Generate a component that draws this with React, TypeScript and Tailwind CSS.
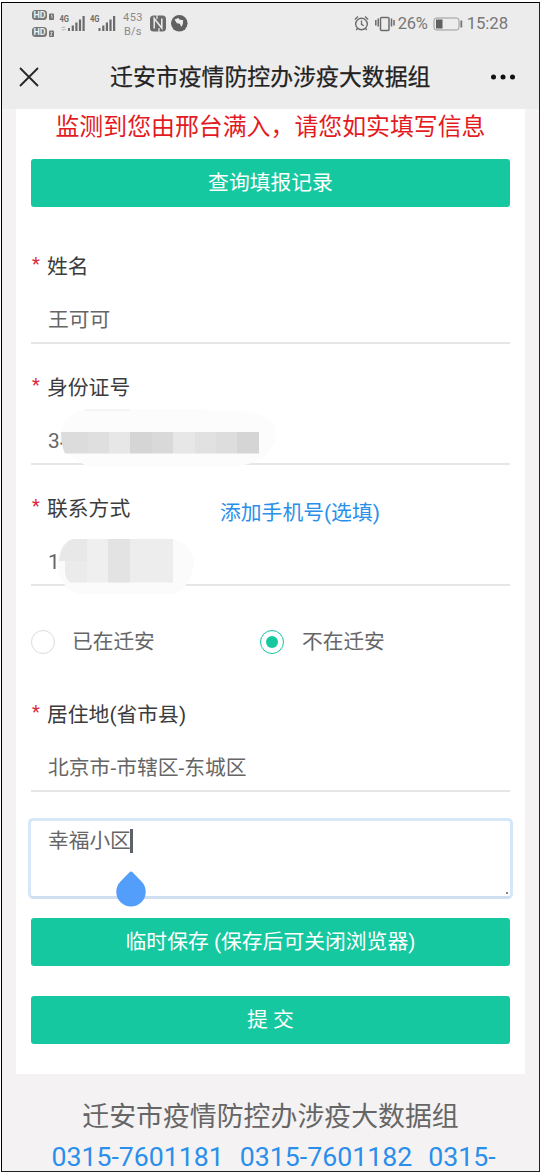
import type { ReactNode } from "react";

function StatusBar() {
    return (
        <div className="flex h-[42px] items-center justify-between pl-[28px] pr-[31px] text-[#6b6b6b]">
            <svg width="160" height="36" viewBox="30 6 160 36" fill="none">
                <g fontFamily="Roboto, sans-serif" fontWeight="700">
                    <rect x="32" y="10" width="15" height="10" rx="3.5" fill="#777" />
                    <rect x="32" y="27" width="15" height="10" rx="3.5" fill="#777" />
                    <text x="33.5" y="18.3" fontSize="9" textLength="12" fill="#eee">HD</text>
                    <text x="33.5" y="35.3" fontSize="9" textLength="12" fill="#eee">HD</text>
                    <rect x="49" y="13.5" width="5" height="6.5" rx="1" fill="#707070" />
                    <rect x="49" y="30.5" width="5" height="6.5" rx="1" fill="#707070" />
                    <path d="M51 15.2h1v3.2M50.5 32.3h1.7l-1.7 3h1.7" stroke="#eee" strokeWidth=".8" />
                    <text x="59.5" y="22" fontSize="9" textLength="9.5" lengthAdjust="spacingAndGlyphs" fill="#6b6b6b">4G</text>
                    <text x="90" y="22" fontSize="9" textLength="9.5" lengthAdjust="spacingAndGlyphs" fill="#6b6b6b">4G</text>
                </g>
                <path d="M61 27.5h4l-1.5-1.5M66 29.5h-4l1.5 1.5" stroke="#c4c4c4" />
                <g fill="#6b6b6b">
                    <path d="M68 28h2v3h-2zM71.7 25.5h2.2V31h-2.2zM75.3 22.5h2.2V31h-2.2zM78.9 19.5h2.2V31h-2.2zM82.5 16h2.2v15h-2.2z" />
                    <path d="M98.5 28h2v3h-2zM102.2 25.5h2.2V31h-2.2zM105.8 22.5h2.2V31h-2.2zM109.4 19.5h2.2V31h-2.2zM113 16h2.2v15H113z" />
                </g>
                <g fontFamily="Roboto, sans-serif" fontSize="11" fill="#8a8a8a">
                    <text x="123" y="21" textLength="19.5">453</text>
                    <text x="124" y="35" textLength="17.5">B/s</text>
                </g>
                <rect x="150" y="15.5" width="16" height="16" rx="3.5" fill="#6b6b6b" />
                <path d="M154.2 28.5v-10l7.6 9.5v-9.5" stroke="#ececec" strokeWidth="1.5" />
                <path d="M157 15v4M159 32v-4" stroke="#ececec" strokeWidth="1.2" />
                <circle cx="179.3" cy="23.3" r="8.3" fill="#606060" />
                <path d="M174.5 19.5l4-1.5 1 1.5 3.7.8-.4 4-1.6 2.7-1.3-3.2-3-.5z" fill="#ececec" />
            </svg>
            <div className="flex items-center">
                <svg width="42" height="22" viewBox="354 13 42 22" fill="none" stroke="#6b6b6b" className="mr-[2px]">
                    <circle cx="361.5" cy="24" r="5.8" strokeWidth="1.4" />
                    <path d="M361.5 20.5v3.8l2.3 1.4M354.8 19.5l3.2-3M368.2 19.5l-3.2-3M357.5 28.5l-1.3 1.5M365.5 28.5l1.3 1.5" strokeWidth="1.3" />
                    <rect x="380.5" y="17.5" width="8.5" height="13" rx="1" strokeWidth="1.5" />
                    <path d="M378.2 18.5v8M375.8 20v5.5M391.5 18.5v8M394 20v5.5" strokeWidth="1.5" />
                </svg>
                <span className="w-[32px] text-[16.5px] tracking-[-0.3px] text-[#777]">26%</span>
                <svg width="30" height="16" viewBox="0 0 30 16" className="ml-[3px] mr-[4px]">
                    <rect x="1" y="2" width="25" height="12" rx="2.5" fill="none" stroke="#999" />
                    <rect x="3" y="3.5" width="6.5" height="9" fill="#606060" />
                    <path d="M28.3 4.5v7" stroke="#777" strokeWidth="1.8" />
                </svg>
                <span className="text-[16.8px] tracking-[-0.1px] text-[#777]">15:28</span>
            </div>
        </div>
    );
}

function TitleBar() {
    return (
        <div className="flex h-[64px] items-center pl-[16px] pr-[23px]">
            <svg width="22" height="22" viewBox="0 0 22 22" stroke="#252525" strokeWidth="1.8">
                <path d="M2 2l18 18M20 2L2 20" />
            </svg>
            <h1 className="ml-[70px] pt-[2px] text-[22.9px] text-[#222] [-webkit-text-stroke:0.25px_#222]">迁安市疫情防控办涉疫大数据组</h1>
            <svg width="26" height="6" viewBox="0 0 26 6" fill="#111" className="ml-auto">
                <circle cx="3.5" cy="3" r="2.5" />
                <circle cx="13" cy="3" r="2.5" />
                <circle cx="22.5" cy="3" r="2.5" />
            </svg>
        </div>
    );
}

function Label({ children }: { children: ReactNode }) {
    return (
        <div className="flex h-[30px] items-center pt-[5px] text-[20.8px] text-[#3c3c3c]">
            <span className="w-[16px] pb-[8px] pl-px text-[18px] leading-none text-[#e0243c]">*</span>
            {children}
        </div>
    );
}

function Value({ children }: { children: ReactNode }) {
    return (
        <div className="flex h-[48px] items-center border-b-2 border-[#e6e6e6] pl-[17px] pt-[4px] text-[20.8px] text-[#666]">
            {children}
        </div>
    );
}

function Button({ children }: { children: ReactNode }) {
    return (
        <button type="button" className="flex h-12 w-full items-center justify-center rounded-[3px] bg-[#15c8a0] pt-[2px] text-[20.8px] text-white">
            {children}
        </button>
    );
}

function IdMask() {
    return (
        <svg width="220" height="60" viewBox="60 409 220 60" className="absolute left-[29px] -top-[8px]">
            <path d="M83 410Q92 408 130 409L230 410Q278 412 276 435Q272 466 225 467L90 467Q66 458 60 438Q62 415 83 410Z" fill="#fcfcfc" />
            <path d="M84 410h46" stroke="#eee" />
            <path d="M61 432h27v21.5H65Q61 446 61 432Z" fill="#dcdcdc" />
            <path d="M88 432h22v21.5H88z" fill="#dfdfdf" />
            <path d="M109 432h21v21.5h-21z" fill="#e7e7e7" />
            <path d="M130 432h22v21.5h-22z" fill="#d5d5d5" />
            <path d="M152 432h21v21.5h-21z" fill="#d9d9d9" />
            <path d="M173 432h22v21.5h-22z" fill="#e7e7e7" />
            <path d="M195 432h21v21.5h-21z" fill="#e1e1e1" />
            <path d="M216 432h21v21.5h-21z" fill="#dddddd" />
            <path d="M237 432h22v21.5h-22z" fill="#d5d5d5" />
        </svg>
    );
}

function PhoneMask() {
    return (
        <svg width="140" height="58" viewBox="56 538 140 58" className="absolute left-[25px] top-0">
            <path d="M75 539H173Q191 543 194 561Q190 594 168 594H80Q58 589 57 561Q59 542 75 539Z" fill="#fbfbfb" />
            <path d="M66 543Q70 539 75 539H87V561H59Q60 549 66 543Z" fill="#e8e8e8" />
            <path d="M65 561h22v21.5H70Q66 579 65 573z" fill="#ebebeb" />
            <path d="M87 539h21v43.5H87z" fill="#efefef" />
            <path d="M108 539h22v43.5h-22z" fill="#e3e3e3" />
            <path d="M130 539h43v43.5h-43z" fill="#ededed" />
        </svg>
    );
}

export default function App() {
    return (
        <div className="h-[1174px] w-[541px] overflow-hidden bg-white pl-px pt-[2px] font-[Roboto,'Noto_Sans_CJK_SC',sans-serif]">
            <div className="flex h-[1170px] w-[539px] flex-col overflow-hidden border border-[#222] border-l-black border-t-black bg-[#f4f2f3]">
                <header className="h-[106px] shrink-0 bg-[#ececec]">
                    <StatusBar />
                    <TitleBar />
                </header>
                <main className="ml-[14px] h-[965px] w-[509px] shrink-0 bg-white px-[15px]">
                    <p className="flex h-[33px] items-center justify-center whitespace-nowrap pt-[4px] text-[23.9px] text-[#e31b1f]">监测到您由邢台满入，请您如实填写信息</p>
                    <div className="mt-[17px]">
                        <Button>查询填报记录</Button>
                    </div>
                    <div className="mt-[43px]">
                        <Label>姓名</Label>
                        <div className="mt-[16px]">
                            <Value>王可可</Value>
                        </div>
                    </div>
                    <div className="mt-[27px]">
                        <Label>身份证号</Label>
                        <div className="relative mt-[16px]">
                            <Value>34</Value>
                            <IdMask />
                        </div>
                    </div>
                    <div className="mt-[27px]">
                        <div className="flex">
                            <div className="w-[189px]">
                                <Label>联系方式</Label>
                            </div>
                            <a className="pt-[6px] text-[20.8px] leading-[30px] text-[#2a8fea]">添加手机号(选填)</a>
                        </div>
                        <div className="relative mt-[10px]">
                            <Value>1</Value>
                            <PhoneMask />
                        </div>
                    </div>
                    <div className="mt-[43px] flex h-[26px] items-center text-[20.7px] text-[#666]">
                        <label className="flex w-[229px] items-center">
                            <span className="mr-[17px] size-6 rounded-full border-[1.5px] border-[#dcdcdc]"></span>
                            <span className="pt-[2px]">已在迁安</span>
                        </label>
                        <label className="flex items-center">
                            <span className="mr-[18px] flex size-6 items-center justify-center rounded-full border-[1.5px] border-[#15c8a0]">
                                <span className="size-3 rounded-full bg-[#15c8a0]"></span>
                            </span>
                            <span className="pt-[2px]">不在迁安</span>
                        </label>
                    </div>
                    <div className="mt-[43px]">
                        <Label>居住地(省市县)</Label>
                        <div className="mt-[16px]">
                            <Value>北京市-市辖区-东城区</Value>
                        </div>
                    </div>
                    <div className="relative -mx-[3px] mt-[26px] h-[81px] rounded-[5px] border-[3px] border-[#d5e7f8] border-b-[#cddff0] pl-[17px] pt-[6px] text-[20.7px] leading-[28px] text-[#666]">
                        <div className="flex items-center">
                            幸福小区
                            <span className="-ml-px h-6 w-[3px] bg-[#5d6268]"></span>
                        </div>
                        <svg width="30" height="36" viewBox="0 0 30 36" className="absolute left-[85px] top-[50px]">
                            <path d="M15 0.5Q16 0.5 17 1.8L25.5 10.5A14.7 14.7 0 1 1 4.5 10.5L13 1.8Q14 0.5 15 0.5Z" fill="#539dfb" />
                        </svg>
                        <span className="absolute bottom-[2px] right-[2px] size-[2px] bg-[#888]"></span>
                    </div>
                    <div className="mt-[19px] flex flex-col gap-[30px]">
                        <Button>临时保存 (保存后可关闭浏览器)</Button>
                        <Button>提 交</Button>
                    </div>
                </main>
                <footer className="flex flex-col items-center pt-[22px]">
                    <p className="text-[26.9px] leading-[42px] text-[#666]">迁安市疫情防控办涉疫大数据组</p>
                    <p className="flex gap-[16px] whitespace-nowrap pl-[6px] text-[26.7px] leading-[38px] text-[#2a8fea]">
                        <a>0315-7601181</a>
                        <a>0315-7601182</a>
                        <a>0315-</a>
                    </p>
                </footer>
            </div>
        </div>
    );
}
